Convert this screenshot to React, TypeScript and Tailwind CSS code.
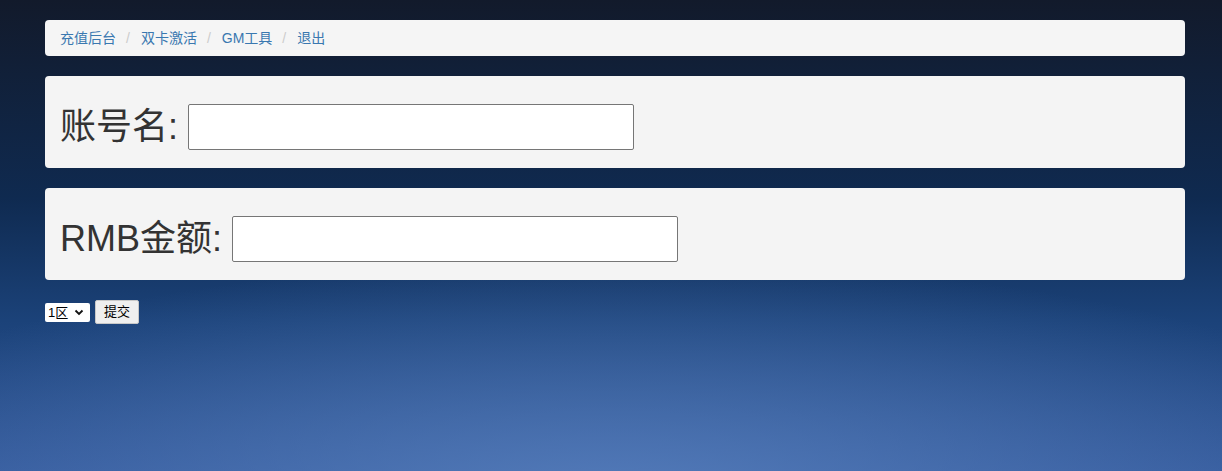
import { useState } from 'react';

const crumbs = ['充值后台', '双卡激活', 'GM工具', '退出'];

function Field({ label }: { label: string }) {
  return (
    <div className="flex items-center gap-[10px] bg-[#f4f4f4] rounded-[4px] px-[15px] pt-[28px] pb-[18px] mb-[20px]">
      <label className="text-[36px] leading-[40px] text-[#333]">{label}</label>
      <input
        type="text"
        className="w-[446px] h-[46px] bg-white border border-[#767676] rounded-[2px] outline-none px-[4px] text-[16px]"
      />
    </div>
  );
}

export default function App() {
  const [zone, setZone] = useState('1');

  return (
    <div
      className="min-h-screen h-[471px] pl-[45px] pr-[37px] pt-[20px] font-['Liberation_Sans','Noto_Sans_CJK_SC',sans-serif] bg-[radial-gradient(ellipse_70%_50%_at_50%_105%,rgba(88,128,190,0.85),rgba(88,128,190,0)_100%),linear-gradient(180deg,#121a2b_0%,#0f2a50_42%,#1b4279_68%,#32589a_100%)]"
    >
      <ol className="flex items-center bg-[#f5f5f5] rounded-[4px] px-[15px] py-[8px] mb-[20px] text-[14px] leading-[20px]">
        {crumbs.map((c, i) => (
          <li key={c} className="flex items-center">
            <a href="#" className="text-[#3a78b0]">{c}</a>
            {i < crumbs.length - 1 && <span className="pl-[10px] pr-[11px] text-[#ccc]">/</span>}
          </li>
        ))}
      </ol>

      <Field label="账号名:" />
      <Field label="RMB金额:" />

      <div className="flex items-center gap-[5px]">
        <div className="flex items-center bg-white h-[19px] w-[45px] pl-[3px] rounded-[2px]">
          <select
            value={zone}
            onChange={(e) => setZone(e.target.value)}
            className="appearance-none bg-transparent outline-none text-[13px] leading-[17px] text-black w-[26px]"
          >
            <option value="1">1区</option>
            <option value="2">2区</option>
          </select>
          <svg width="10" height="10" viewBox="0 0 10 10" className="pointer-events-none">
            <path d="M1.5 3.5 L5 7 L8.5 3.5" fill="none" stroke="#111" strokeWidth="1.8" />
          </svg>
        </div>
        <button className="h-[24px] px-[8px] bg-[#efefef] border border-[#c8c8c8] rounded-[2px] text-[13px] text-black">
          提交
        </button>
      </div>
    </div>
  );
}
